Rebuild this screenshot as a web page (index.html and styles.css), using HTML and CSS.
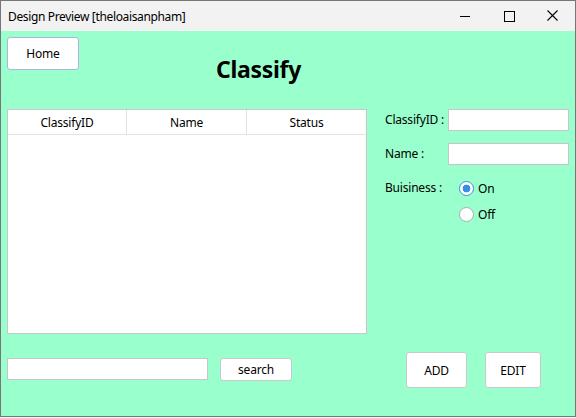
FILE: index.html
```html
<!DOCTYPE html>
<html>
<head>
<meta charset="utf-8">
<title>Design Preview [theloaisanpham]</title>
<link rel="stylesheet" href="styles.css">
</head>
<body>
<div class="window">
  <div class="titlebar">
    <span class="caption">Design Preview [theloaisanpham]</span>
    <div class="controls">
      <span class="ctl"><svg width="44" height="30" viewBox="0 0 44 30"><path d="M17 15.5H27" stroke="#000" stroke-width="1"/></svg></span>
      <span class="ctl"><svg width="44" height="30" viewBox="0 0 44 30"><rect x="17.5" y="10.5" width="10" height="10" fill="none" stroke="#000" stroke-width="1"/></svg></span>
      <span class="ctl"><svg width="44" height="30" viewBox="0 0 44 30"><path d="M16.5 9.5L26.5 19.5M26.5 9.5L16.5 19.5" stroke="#000" stroke-width="1.1"/></svg></span>
    </div>
  </div>
  <div class="content">
    <div class="header">
      <button class="btn home">Home</button>
      <h1 class="title">Classify</h1>
    </div>
    <div class="main">
      <div class="table">
        <div class="thead">
          <div class="th">ClassifyID</div>
          <div class="th">Name</div>
          <div class="th last">Status</div>
        </div>
        <div class="tbody"></div>
      </div>
      <div class="form">
        <label class="lbl">ClassifyID :</label>
        <div class="field"></div>
        <label class="lbl">Name :</label>
        <div class="field"></div>
        <label class="lbl">Buisiness :</label>
        <div class="radio"><span class="dot on"></span>On</div>
        <span class="spacer"></span>
        <div class="radio off"><span class="dot"></span>Off</div>
      </div>
    </div>
    <div class="bottom">
      <div class="field search-field"></div>
      <button class="btn search">search</button>
      <button class="btn big add">ADD</button>
      <button class="btn big edit">EDIT</button>
    </div>
  </div>
</div>
</body>
</html>
```
FILE: styles.css
```css
* { box-sizing: border-box; }
html, body { margin: 0; padding: 0; }
body {
  width: 576px;
  height: 418px;
  background: #f4f4f4;
  font-family: "Noto Sans", "Open Sans", sans-serif;
  font-size: 12px;
  letter-spacing: -0.2px;
  color: #000;
}
.window {
  width: 576px;
  height: 417px;
  border: 1px solid #767676;
  display: flex;
  flex-direction: column;
  background: #99ffcc;
}
.titlebar {
  height: 30px;
  background: #f2f2f2;
  display: flex;
  align-items: center;
  padding-left: 7px;
}
.caption { flex: 1; font-size: 12px; letter-spacing: -0.35px; }
.controls { display: flex; height: 30px; }
.ctl { width: 44px; height: 30px; display: block; }
.ctl svg { display: block; }
.content {
  flex: 1;
  padding: 6px 0 0 6px;
}
.header {
  display: flex;
  height: 72px;
}
.btn {
  font-family: inherit;
  font-size: 12px;
  letter-spacing: -0.2px;
  color: #000;
  background: #fff;
  border: 1px solid #c9c9c9;
  border-radius: 3px;
  padding: 0;
}
.home {
  width: 72px;
  height: 33px;
  border-color: #a9b8dc;
}
.title {
  margin: 18px 0 0 137px;
  font-size: 23px;
  font-weight: bold;
  letter-spacing: -0.3px;
  line-height: 28px;
}
.main { display: flex; }
.table {
  width: 360px;
  height: 225px;
  background: #fff;
  border: 1px solid #c8c8c8;
}
.thead {
  display: grid;
  grid-template-columns: 119px 120px 1fr;
  height: 25px;
  border-bottom: 1px solid #e3e3e3;
}
.th {
  display: flex;
  align-items: center;
  justify-content: center;
  border-right: 1px solid #e3e3e3;
}
.th.last { border-right: none; }
.form {
  margin-left: 18px;
  display: grid;
  grid-template-columns: 63px 121px;
  grid-auto-rows: 22px;
  row-gap: 12px;
  align-items: center;
  align-content: start;
}
.form > .off, .form > .spacer { margin-top: -15px; }
.lbl { line-height: 22px; }
.field {
  height: 22px;
  background: #fff;
  border: 1px solid #c6c6c6;
}
.radio {
  display: flex;
  align-items: center;
  margin-left: 11px;
  gap: 4px;
}
.dot {
  width: 15px;
  height: 15px;
  border-radius: 50%;
  border: 1px solid #adadad;
  background: #fff;
}
.dot.on {
  border-color: #3b8ee8;
  background: radial-gradient(circle, #3b8ee8 0 3.6px, #fff 4.2px);
}
.bottom {
  display: flex;
  align-items: flex-start;
  margin-top: 18px;
}
.search-field {
  width: 201px;
  margin-top: 6px;
}
.search {
  width: 72px;
  height: 23px;
  margin: 6px 0 0 12px;
}
.big { height: 36px; }
.add { width: 61px; margin-left: 114px; }
.edit { width: 56px; margin-left: 18px; }
```
